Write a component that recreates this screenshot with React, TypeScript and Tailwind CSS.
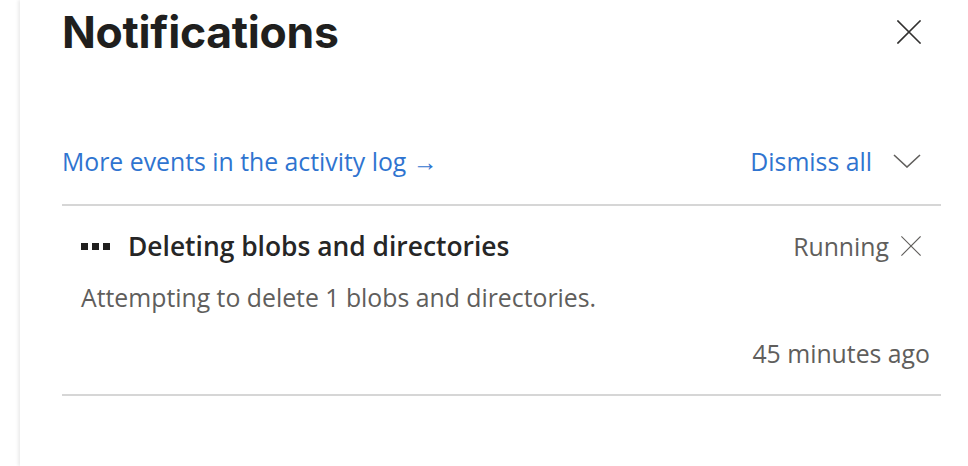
import React from "react";

function XIcon({ size, stroke = 1.5, color = "#323130" }: { size: number; stroke?: number; color?: string }) {
  return (
    <svg width={size} height={size} viewBox="0 0 24 24" fill="none">
      <path d="M1 1L23 23M23 1L1 23" stroke={color} strokeWidth={stroke} strokeLinecap="square" />
    </svg>
  );
}

export default function App() {
  return (
    <div className="flex h-[466px] w-[968px] overflow-hidden bg-white">
      <div className="w-[20px] shrink-0 bg-white" />
      <div
        className="flex min-w-0 flex-1 flex-col bg-white pl-[42px] pr-[27px] shadow-[-2px_0_3px_rgba(0,0,0,0.08)]"
        style={{ fontFamily: '"Open Sans", "Noto Sans", sans-serif' }}
      >
        <div className="flex items-start justify-between pt-[5px]">
          <h1
            className="text-[44.5px] font-bold leading-[54px] tracking-[-0.3px] text-[#201f1e]"
            style={{ fontFamily: 'Inter, "Liberation Sans", sans-serif' }}
          >
            Notifications
          </h1>
          <div className="mr-[20px] mt-[15px]">
            <XIcon size={24} stroke={1.6} color="#323130" />
          </div>
        </div>

        <div className="mt-[86px] flex items-center justify-between pb-[27px]">
          <a className="text-[24.8px] leading-[32px] text-[#2f74d0]">More events in the activity log →</a>
          <div className="mr-[20px] flex items-center gap-[21px]">
            <span className="text-[24.8px] leading-[32px] text-[#2f74d0]">Dismiss all</span>
            <svg width="28" height="14" viewBox="0 0 28 14" fill="none">
              <path d="M1 1L14 13L27 1" stroke="#605e5c" strokeWidth="1.6" />
            </svg>
          </div>
        </div>

        <div className="h-[2px] bg-[#d6d6d6]" />

        <div className="pl-[19px] pr-[11px] pt-[24px] pb-[25px]">
          <div className="flex items-center justify-between">
            <div className="flex items-center gap-[18px]">
              <div className="flex gap-[4px]">
                <span className="block h-[7px] w-[7px] bg-[#201f1e]" />
                <span className="block h-[7px] w-[7px] bg-[#201f1e]" />
                <span className="block h-[7px] w-[7px] bg-[#201f1e]" />
              </div>
              <span className="text-[26.4px] font-semibold leading-[32px] text-[#262626]">
                Deleting blobs and directories
              </span>
            </div>
            <div className="mr-[9px] flex items-center gap-[12px]">
              <span className="text-[24.8px] leading-[32px] text-[#605e5c]">Running</span>
              <XIcon size={20} stroke={1.4} color="#605e5c" />
            </div>
          </div>
          <div className="mt-[19px] text-[24.8px] leading-[32px] text-[#605e5c]">
            Attempting to delete 1 blobs and directories.
          </div>
          <div className="mt-[24px] text-right text-[24.8px] leading-[32px] text-[#605e5c]">45 minutes ago</div>
        </div>

        <div className="h-[2px] bg-[#d6d6d6]" />
      </div>
    </div>
  );
}
